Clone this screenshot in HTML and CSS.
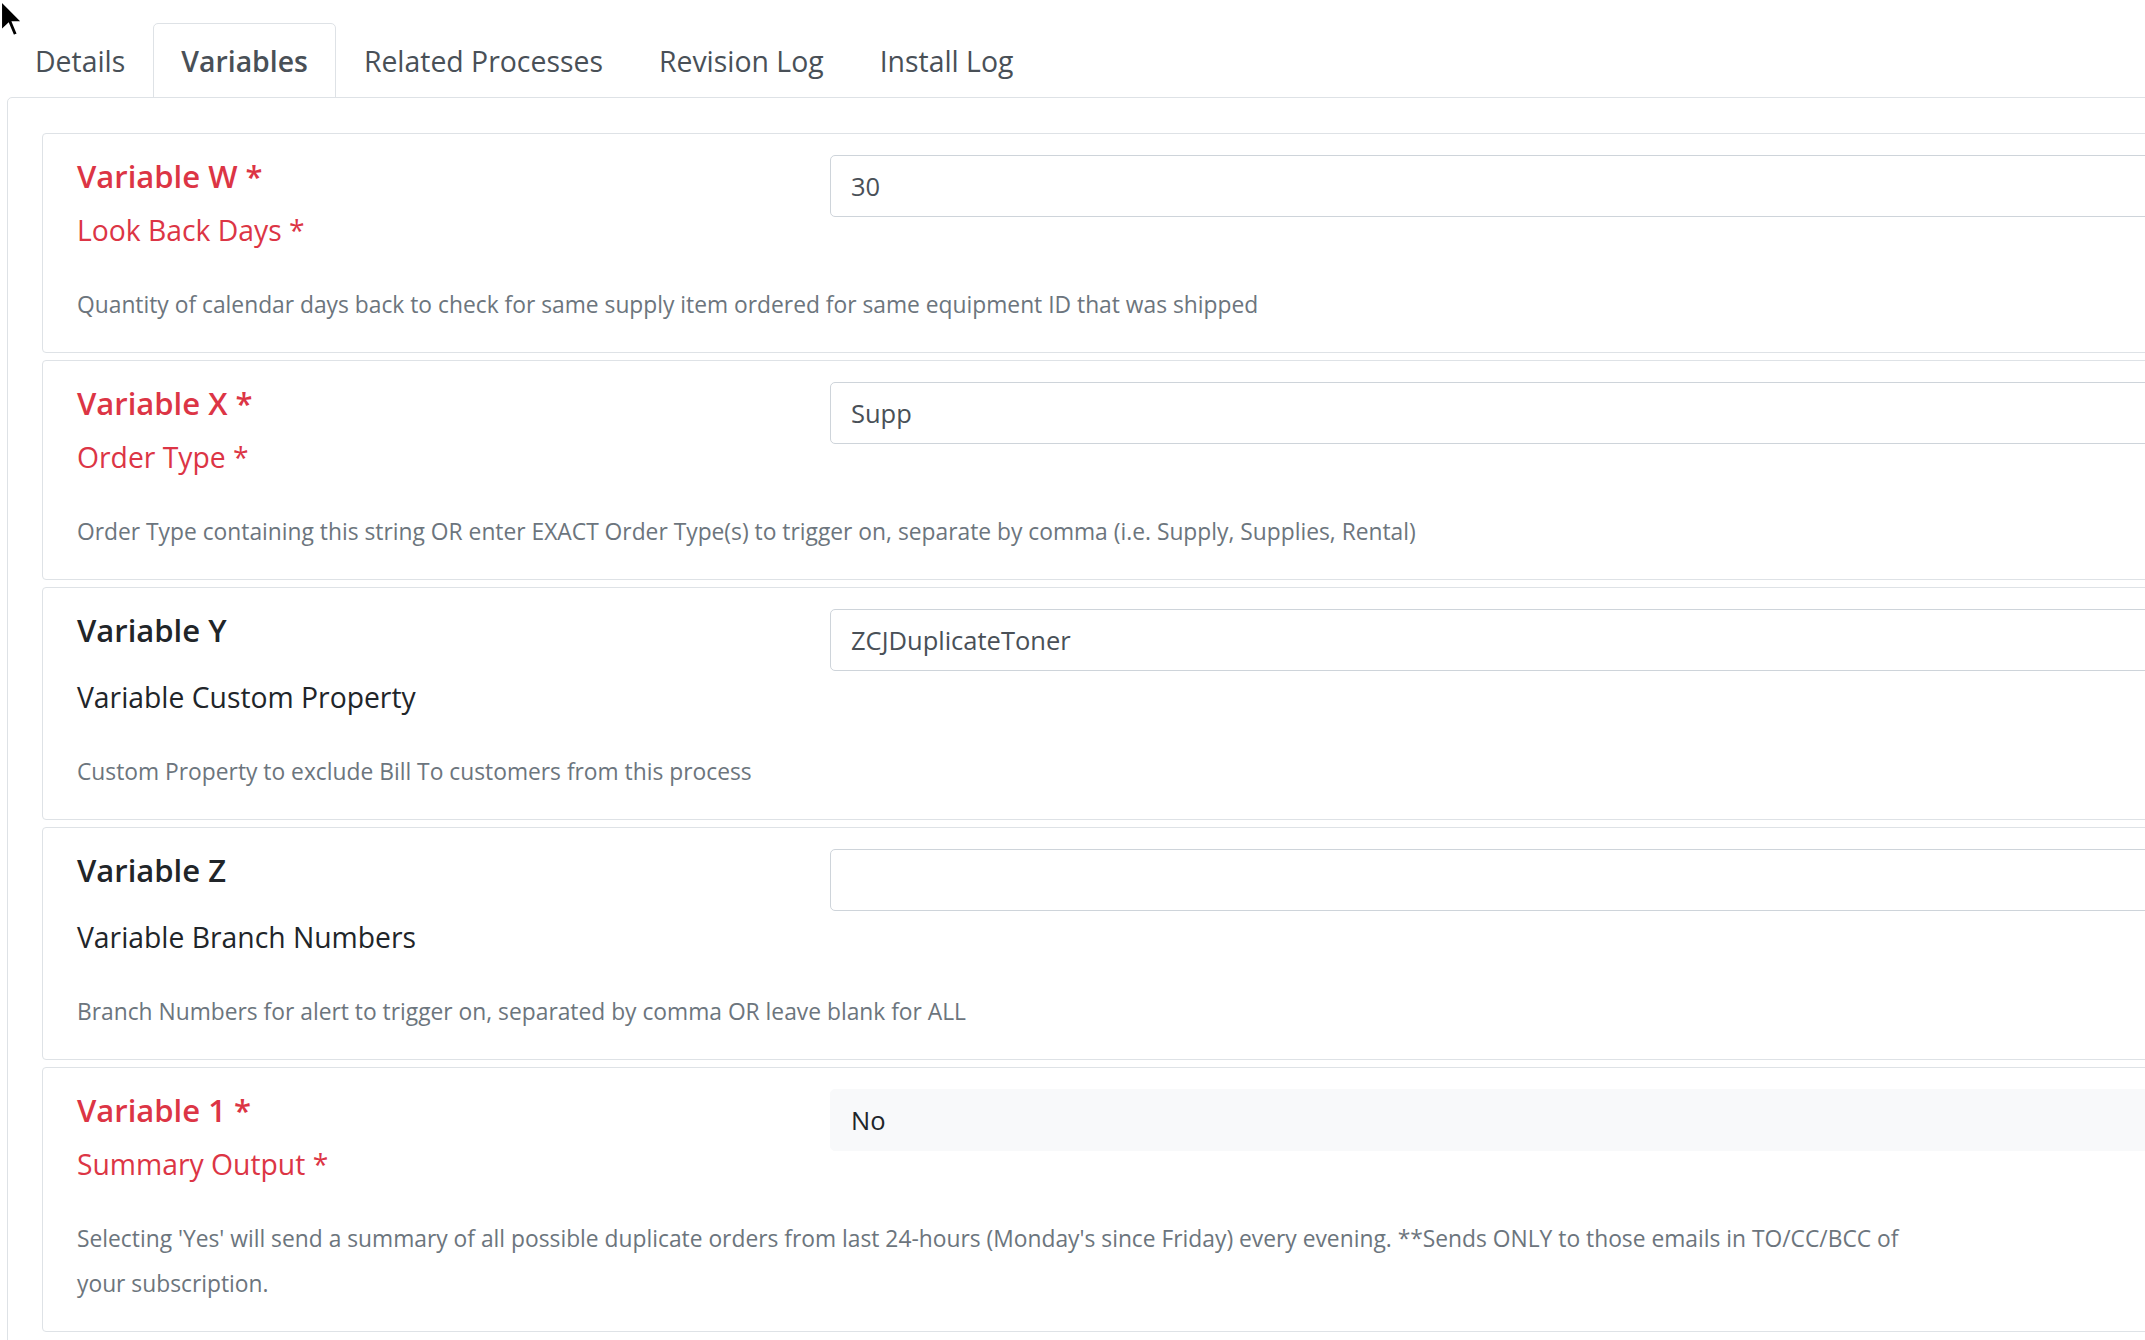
FILE: index.html
```html
<!DOCTYPE html>
<html lang="en">
  <head>
    <meta charset="UTF-8" />
    <meta name="viewport" content="width=device-width, initial-scale=1.0" />
    <title>Process Variables</title>
    <link rel="stylesheet" href="styles.css">
  </head>
  <body>
    <svg class="cursor" viewBox="0 0 13 21" width="24" height="38">
      <path d="M0.5 0.5 L0.5 17 L4.5 13.2 L7.3 19.8 L9.6 18.8 L6.9 12.3 L12.3 12.3 Z" fill="#000" stroke="#fff" stroke-width="1" />
    </svg>
    <div class="page">
      <ul class="nav-tabs">
        <li><a class="tab">Details</a></li>
        <li><a class="tab active">Variables</a></li>
        <li><a class="tab">Related Processes</a></li>
        <li><a class="tab">Revision Log</a></li>
        <li><a class="tab">Install Log</a></li>
      </ul>
      <div class="tab-content">
        <div class="var-card required">
          <div class="var-labels">
            <div class="var-title">Variable W *</div>
            <div class="var-name">Look Back Days *</div>
          </div>
          <div class="var-field">
            <input class="form-control" type="text" value="30" />
          </div>
          <p class="var-help">Quantity of calendar days back to check for same supply item ordered for same equipment ID that was shipped</p>
        </div>

        <div class="var-card required">
          <div class="var-labels">
            <div class="var-title">Variable X *</div>
            <div class="var-name">Order Type *</div>
          </div>
          <div class="var-field">
            <input class="form-control" type="text" value="Supp" />
          </div>
          <p class="var-help">Order Type containing this string OR enter EXACT Order Type(s) to trigger on, separate by comma (i.e. Supply, Supplies, Rental)</p>
        </div>

        <div class="var-card">
          <div class="var-labels">
            <div class="var-title">Variable Y</div>
            <div class="var-name">Variable Custom Property</div>
          </div>
          <div class="var-field">
            <input class="form-control" type="text" value="ZCJDuplicateToner" />
          </div>
          <p class="var-help">Custom Property to exclude Bill To customers from this process</p>
        </div>

        <div class="var-card">
          <div class="var-labels">
            <div class="var-title">Variable Z</div>
            <div class="var-name">Variable Branch Numbers</div>
          </div>
          <div class="var-field">
            <input class="form-control" type="text" value="" />
          </div>
          <p class="var-help">Branch Numbers for alert to trigger on, separated by comma OR leave blank for ALL</p>
        </div>

        <div class="var-card required">
          <div class="var-labels">
            <div class="var-title">Variable 1 *</div>
            <div class="var-name">Summary Output *</div>
          </div>
          <div class="var-field">
            <div class="form-select">No</div>
          </div>
          <p class="var-help">Selecting 'Yes' will send a summary of all possible duplicate orders from last 24-hours (Monday's since Friday) every evening. **Sends ONLY to those emails in TO/CC/BCC of your subscription.</p>
        </div>
      </div>
    </div>
  </body>
</html>
```

FILE: styles.css
```css
body {
  margin: 0;
  overflow: hidden;
  background-color: #fff;
  font-family: "Open Sans", "Noto Sans", sans-serif;
  color: #212529;
}

.cursor {
  position: absolute;
  top: 0;
  left: 0;
  z-index: 10;
}

.page {
  width: 2400px;
  padding: 23px 0 0 7px;
}

/* tabs */
.nav-tabs {
  display: flex;
  list-style: none;
  margin: 0 0 -1px 0;
  padding: 0;
}

.tab {
  display: block;
  padding: 15px 27px 13px 27px;
  border: 1px solid transparent;
  border-radius: 5px 5px 0 0;
  font-size: 28.4px;
  line-height: 45px;
  color: #495057;
  cursor: pointer;
}

.tab.active {
  border-color: #dee2e6;
  font-weight: 600;
}

.tab-content {
  border: 1px solid #dee2e6;
  border-radius: 5px 0 0 0;
  padding: 35px 0 0 34px;
  min-height: 1300px;
}

/* variable cards */
.var-card {
  display: grid;
  grid-template-columns: 753px 1fr;
  border: 1px solid #dee2e6;
  border-radius: 4px;
  padding: 21px 34px 25px 34px;
  margin-bottom: 7px;
}

.var-title {
  font-size: 31px;
  font-weight: 600;
  line-height: 43px;
}

.var-name {
  font-size: 28.3px;
  line-height: 45px;
  margin-top: 23.4px;
}

.required .var-title,
.required .var-name {
  color: #dc3545;
}

.required .var-name {
  margin-top: 10.4px;
}

.var-help {
  grid-column: 1 / -1;
  margin: 28.6px 0 0 0;
  max-width: 1858px;
  font-size: 22.8px;
  line-height: 45px;
  color: #6c757d;
}

.form-control,
.form-select {
  display: block;
  box-sizing: border-box;
  width: 100%;
  height: 62px;
  padding: 0 20px;
  border: 1px solid #ced4da;
  border-radius: 5px;
  font-family: inherit;
  font-size: 25.5px;
  color: #495057;
  background-color: #fff;
  outline: none;
}

.form-select {
  border-color: #f8f9fa;
  background-color: #f8f9fa;
  line-height: 60px;
  color: #212529;
}
```
